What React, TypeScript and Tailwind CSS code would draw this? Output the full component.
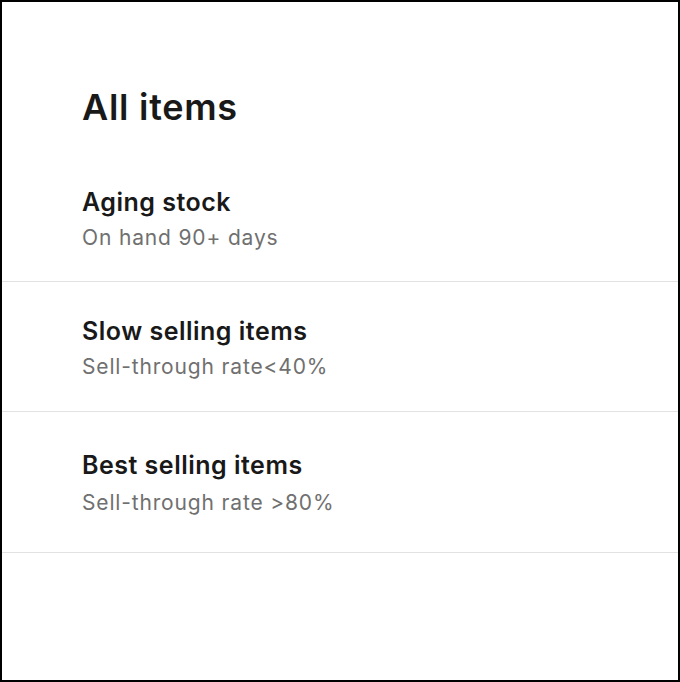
const rows = [
  { title: "Aging stock", sub: "On hand 90+ days", pad: "pt-[33px] pb-[29px]", gap: "mt-[6px]" },
  { title: "Slow selling items", sub: "Sell-through rate<40%", pad: "pt-[33px] pb-[30px]", gap: "mt-[6px]" },
  { title: "Best selling items", sub: "Sell-through rate >80%", pad: "pt-[37px] pb-[35px]", gap: "mt-[8px]" },
];

export default function App() {
  return (
    <div
      className="w-[680px] h-[682px] border-2 border-black bg-white text-[#191919]"
      style={{ fontFamily: "Inter, 'Noto Sans', sans-serif" }}
    >
      <h1 className="pl-[80px] pt-[83px] text-[36px] leading-[44px] font-semibold tracking-[0.02em]">
        All items
      </h1>
      <ul className="mt-[24px]">
        {rows.map((row) => (
          <li key={row.title} className={`border-b border-[#e2e2e2] pl-[80px] ${row.pad}`}>
            <div className="text-[25px] leading-[32px] font-semibold tracking-[0.02em]">{row.title}</div>
            <div className={`text-[21px] leading-[28px] text-[#707070] tracking-[0.04em] ${row.gap}`}>
              {row.sub}
            </div>
          </li>
        ))}
      </ul>
    </div>
  );
}
